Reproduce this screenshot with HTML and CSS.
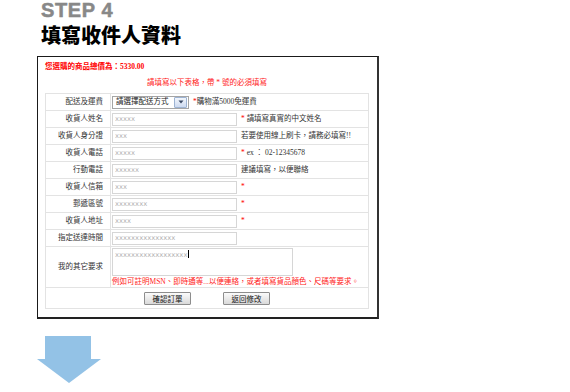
FILE: index.html
```html
<!DOCTYPE html>
<html lang="zh-Hant">
<head>
<meta charset="utf-8">
<title>STEP 4 填寫收件人資料</title>
<link rel="stylesheet" href="styles.css">
</head>
<body>
<div class="page">
  <div class="step">STEP 4</div>
  <h1 class="title">填寫收件人資料</h1>
  <div class="box">
    <p class="total">您選購的商品總價為：5330.00</p>
    <p class="notice">請填寫以下表格，帶 * 號的必須填寫</p>
    <table class="form">
      <tr>
        <th>配送及運費</th>
        <td><div class="field"><span class="select">請選擇配送方式<span class="sel-btn"><svg width="6" height="4" viewBox="0 0 6 4"><path d="M0.5 0.5h5L3 3.5z" fill="#3a4a66"/></svg></span></span><span class="hint"><span class="req">*</span>購物滿5000免運費</span></div></td>
      </tr>
      <tr>
        <th>收貨人姓名</th>
        <td><div class="field"><input class="inp" placeholder="xxxxx"><span class="hint"><span class="req">*</span> 請填寫真實的中文姓名</span></div></td>
      </tr>
      <tr>
        <th>收貨人身分證</th>
        <td><div class="field"><input class="inp" placeholder="xxx"><span class="hint">若要使用線上刷卡，請務必填寫!!</span></div></td>
      </tr>
      <tr>
        <th>收貨人電話</th>
        <td><div class="field"><input class="inp" placeholder="xxxxx"><span class="hint"><span class="req">*</span> ex ： 02-12345678</span></div></td>
      </tr>
      <tr>
        <th>行動電話</th>
        <td><div class="field"><input class="inp" placeholder="xxxxxx"><span class="hint">建議填寫，以便聯絡</span></div></td>
      </tr>
      <tr>
        <th>收貨人信箱</th>
        <td><div class="field"><input class="inp" placeholder="xxx"><span class="hint"><span class="req">*</span></span></div></td>
      </tr>
      <tr>
        <th>郵遞區號</th>
        <td><div class="field"><input class="inp" placeholder="xxxxxxxx"><span class="hint"><span class="req">*</span></span></div></td>
      </tr>
      <tr>
        <th>收貨人地址</th>
        <td><div class="field"><input class="inp" placeholder="xxxx"><span class="hint"><span class="req">*</span></span></div></td>
      </tr>
      <tr>
        <th>指定送達時間</th>
        <td><div class="field"><input class="inp" placeholder="xxxxxxxxxxxxxxx"></div></td>
      </tr>
      <tr class="tall">
        <th>我的其它要求</th>
        <td>
          <div class="area"><span class="area-text">xxxxxxxxxxxxxxxxxx</span><span class="caret"></span></div>
          <p class="area-note">例如可註明MSN、即時通等...以便連絡，或者填寫貨品顏色、尺碼等要求。</p>
        </td>
      </tr>
      <tr class="actions">
        <td colspan="2"><div class="buttons"><button class="btn" type="button">確認訂單</button><button class="btn" type="button">返回修改</button></div></td>
      </tr>
    </table>
  </div>
  <svg class="down-arrow" width="64" height="47" viewBox="0 0 64 47"><polygon points="8,0 54,0 54,23 64,23 32,47 0,23 8,23" fill="#93c2e6"/></svg>
</div>
</body>
</html>
```
FILE: styles.css
```css
body {
  margin: 0;
  background: #fff;
  font-family: "Noto Sans CJK TC", sans-serif;
}

.page {
  padding-left: 37px;
}

.step {
  margin-left: 4px;
  font: bold 20px/20px "Liberation Sans", "DejaVu Sans", sans-serif;
  letter-spacing: 0.6px;
  color: #888;
  -webkit-text-stroke: 0.5px #888;
}

.title {
  margin: 3px 0 0 4px;
  font: 900 20px/24px "Noto Sans CJK TC", sans-serif;
  color: #000;
}

.box {
  margin-top: 9px;
  width: 342px;
  box-sizing: border-box;
  border: 1px solid #1a1a1a;
  border-right: 2px solid #333;
  border-bottom: 2px solid #222;
  padding: 3px 8px 8px 7px;
}

.total {
  margin: 0;
  font: bold 7.5px/14px "Liberation Serif", "Noto Sans CJK TC", serif;
  color: #f00;
}

.notice {
  margin: 2px 0 3px;
  text-align: center;
  font: 7.5px/14px "Liberation Serif", "Noto Sans CJK TC", serif;
  color: #f22;
}

.form {
  width: 324px;
  border-collapse: collapse;
  border: 1px solid #e3e3e3;
  font: 7.5px/12px "Liberation Serif", "Noto Sans CJK TC", serif;
  color: #333;
}

.form th,
.form td {
  border: 1px solid #e3e3e3;
  height: 16px;
  padding: 0 1px;
  vertical-align: middle;
}

.form th {
  width: 56px;
  padding-right: 7px;
  text-align: right;
  font-weight: normal;
  color: #333;
}

.field {
  display: flex;
  align-items: center;
  gap: 4px;
}

.inp {
  width: 125px;
  height: 13px;
  box-sizing: border-box;
  margin: 0;
  padding: 0 2px;
  border: 1px solid #d6d6d6;
  font: 6.8px "DejaVu Sans", sans-serif;
  color: #999;
  outline: none;
}

.inp::placeholder {
  color: #b3b3b3;
}

.hint {
  white-space: nowrap;
  color: #333;
}

.req {
  color: #f00;
}

.select {
  display: inline-flex;
  align-items: center;
  justify-content: space-between;
  width: 77px;
  height: 13px;
  box-sizing: border-box;
  padding: 0 1px 0 3px;
  border: 1px solid #a5a5a5;
  background: #fff;
  color: #222;
  font-size: 7.5px;
}

.sel-btn {
  display: flex;
  align-items: center;
  justify-content: center;
  width: 11px;
  height: 9px;
  border: 1px solid #9db3d3;
  border-radius: 1px;
  background: linear-gradient(#f2f6fc, #cddaf0);
}

.tall th {
  height: 40px;
}

.area {
  width: 181px;
  height: 28px;
  box-sizing: border-box;
  margin-top: 1px;
  padding: 1px 2px;
  border: 1px solid #d6d6d6;
  font: 6.8px/10px "DejaVu Sans", sans-serif;
  color: #b3b3b3;
}

.caret {
  display: inline-block;
  width: 1px;
  height: 8px;
  margin-left: 1px;
  vertical-align: -1px;
  background: #000;
}

.area-note {
  margin: 0;
  line-height: 11px;
  color: #f22;
  white-space: nowrap;
}

.actions td {
  height: 20px;
}

.buttons {
  display: flex;
  justify-content: center;
  gap: 32px;
}

.btn {
  width: 47px;
  height: 13px;
  margin: 0;
  padding: 0;
  border: 1px solid #8d8d8d;
  border-radius: 1px;
  background: linear-gradient(#fbfbfb, #d9d9d9);
  font: 7.5px/11px "Noto Sans CJK TC", sans-serif;
  color: #111;
}

.down-arrow {
  display: block;
  margin-top: 17px;
}
```
